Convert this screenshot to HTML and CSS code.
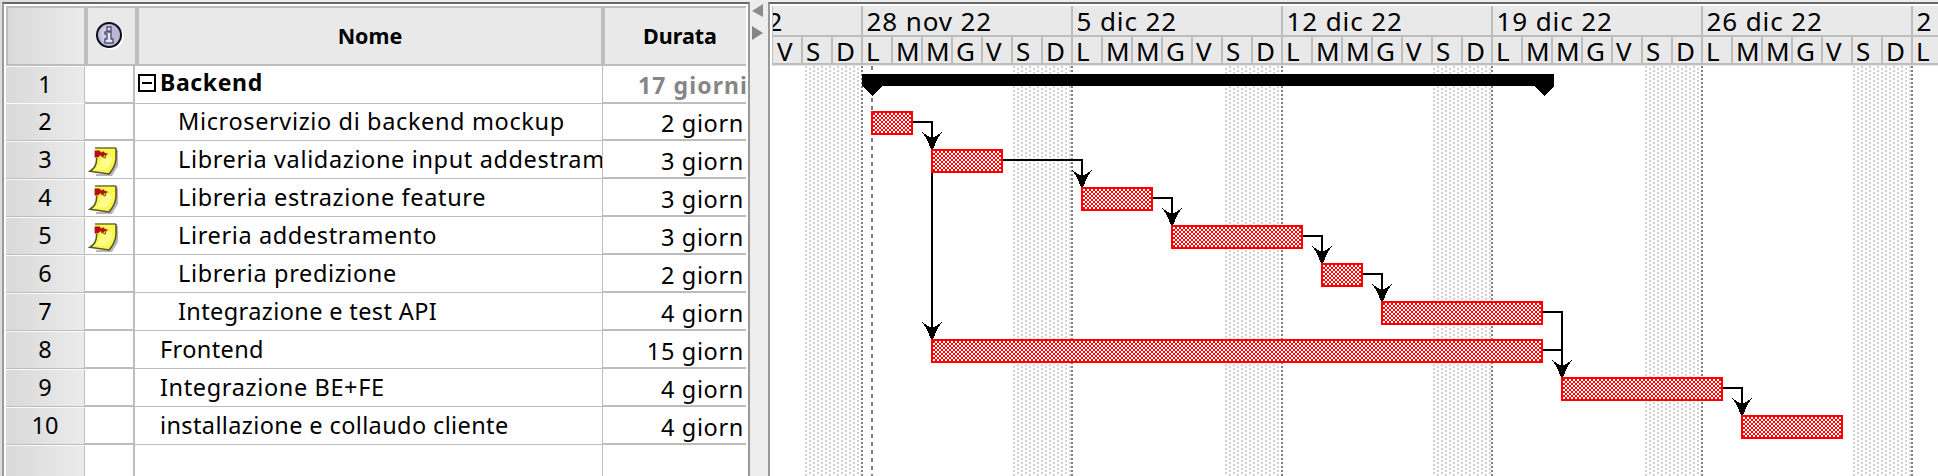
FILE: index.html
```html
<!DOCTYPE html>
<html lang="it">
<head>
<meta charset="utf-8">
<title>Gantt</title>
<link rel="stylesheet" href="styles.css">
</head>
<body>
<svg class="defs" width="0" height="0">
  <symbol id="note" viewBox="0 0 16 16">
    <path d="M13 2h2v8l-3 5H4v-1h7z" fill="#b9b4bb"/>
    <path d="M3.500 1H14v5.500Q13.600 10.500 10.500 14L1 12.600Q4.500 10.500 4.300 6z" fill="#fbf84c"/>
    <path d="M7 5h5q.5 4-3.500 7L4 11.500Q6.500 9 7 5z" fill="#fffd8a"/>
    <path d="M3.500 1H14" stroke="#85854a" stroke-width=".9"/>
    <path d="M14 1v5.500Q13.600 10.500 10.500 14L1 12.600Q4.500 10.500 4.300 6" fill="none" stroke="#55552c" stroke-width=".8"/>
    <path d="M3.300 2.200h2.500l.8 1 1-.6.8.8 1.800.6-2 .7-.8.9-1.200-1-1.200 1.200H3.300z" fill="#b50f12"/>
    <path d="M6.500 5l2 1 .5-1.500" fill="none" stroke="#7c6a10" stroke-width=".6"/>
  </symbol>
</svg>
<div class="app">
  <section class="table-pane">
    <div class="table">
      <div class="row head">
        <div class="cell num"></div>
        <div class="cell info">
          <svg width="28" height="28" viewBox="0 0 14 14">
            <circle cx="7.300" cy="7.300" r="6.500" fill="#fff"/>
            <circle cx="6.500" cy="6.500" r="6" fill="#b9b8d8" stroke="#0c0c14"/>
            <path d="M2.500 4q2-2.500 5-2L4 10Q1.500 8 2.500 4z" fill="#cfcde6"/>
            <path d="M5.500 2.500h2v2h-2zM4.500 5h3v3.500h1v2h-4v-2h1V6h-1z" fill="#e6e5f5" stroke="#55556f" stroke-width=".7"/>
          </svg>
        </div>
        <div class="cell name">Nome</div>
        <div class="cell dur">Durata</div>
      </div>
      <div class="row first"><div class="cell num">1</div><div class="cell info"></div><div class="cell name"><i class="toggle"></i><span class="summary">Backend</span></div><div class="cell dur">17 giorni</div></div>
      <div class="row"><div class="cell num">2</div><div class="cell info"></div><div class="cell name sub">Microservizio di backend mockup</div><div class="cell dur">2 giorn</div></div>
      <div class="row noted"><div class="cell num">3</div><div class="cell info"><svg width="32" height="32"><use href="#note"/></svg></div><div class="cell name sub">Libreria validazione input addestram</div><div class="cell dur">3 giorn</div></div>
      <div class="row noted"><div class="cell num">4</div><div class="cell info"><svg width="32" height="32"><use href="#note"/></svg></div><div class="cell name sub">Libreria estrazione feature</div><div class="cell dur">3 giorn</div></div>
      <div class="row noted"><div class="cell num">5</div><div class="cell info"><svg width="32" height="32"><use href="#note"/></svg></div><div class="cell name sub">Lireria addestramento</div><div class="cell dur">3 giorn</div></div>
      <div class="row"><div class="cell num">6</div><div class="cell info"></div><div class="cell name sub">Libreria predizione</div><div class="cell dur">2 giorn</div></div>
      <div class="row"><div class="cell num">7</div><div class="cell info"></div><div class="cell name sub tight">Integrazione e test API</div><div class="cell dur">4 giorn</div></div>
      <div class="row"><div class="cell num">8</div><div class="cell info"></div><div class="cell name tight">Frontend</div><div class="cell dur">15 giorn</div></div>
      <div class="row"><div class="cell num">9</div><div class="cell info"></div><div class="cell name">Integrazione BE+FE</div><div class="cell dur">4 giorn</div></div>
      <div class="row"><div class="cell num">10</div><div class="cell info"></div><div class="cell name tight">installazione e collaudo cliente</div><div class="cell dur">4 giorn</div></div>
      <div class="row rest"><div class="cell num"></div><div class="cell info"></div><div class="cell name"></div><div class="cell dur"></div></div>
    </div>
  </section>
  <div class="splitter">
    <svg width="18" height="44" viewBox="0 0 18 44"><path d="M13 2v13L2 9z" fill="#8c8c8c"/><path d="M2 24v14l11-7z" fill="#858585"/></svg>
  </div>
  <section class="chart-pane">
    <div class="weeks">
      <div class="week lead"><span class="date">2</span><div class="days"><b>V</b><b>S</b><b>D</b></div></div>
      <div class="week"><span class="date">28 nov 22</span><div class="days"><b>L</b><b>M</b><b>M</b><b>G</b><b>V</b><b>S</b><b>D</b></div></div>
      <div class="week"><span class="date">5 dic 22</span><div class="days"><b>L</b><b>M</b><b>M</b><b>G</b><b>V</b><b>S</b><b>D</b></div></div>
      <div class="week"><span class="date">12 dic 22</span><div class="days"><b>L</b><b>M</b><b>M</b><b>G</b><b>V</b><b>S</b><b>D</b></div></div>
      <div class="week"><span class="date">19 dic 22</span><div class="days"><b>L</b><b>M</b><b>M</b><b>G</b><b>V</b><b>S</b><b>D</b></div></div>
      <div class="week"><span class="date">26 dic 22</span><div class="days"><b>L</b><b>M</b><b>M</b><b>G</b><b>V</b><b>S</b><b>D</b></div></div>
      <div class="week"><span class="date">2</span><div class="days"><b>L</b></div></div>
    </div>
    <svg class="chart" width="1166" height="410" viewBox="772 66 1166 410" shape-rendering="crispEdges">
      <defs>
        <pattern id="dots" x="805" y="66" width="8" height="4" patternUnits="userSpaceOnUse">
          <path d="M0 0h2v2h-2zM4 2h2v2h-2z" fill="#d0d0d0"/>
        </pattern>
        <pattern id="hatch" x="1" y="1" width="4" height="4" patternUnits="userSpaceOnUse">
          <path d="M0 0h4v4h-4z" fill="#fff"/><path d="M0 0h2v2h-2zM2 2h2v2h-2z" fill="#f00"/>
        </pattern>
        <path id="arrow" d="M-10-17L-4-13L0-11.500L4-13L10-17L5.800-11L1 0H-1L-5.800-11z"/>
      </defs>
      <g fill="url(#dots)">
        <path d="M805 66h56v410h-56zM1012 66h59v410h-59zM1225 66h56v410h-56zM1432 66h59v410h-59zM1645 66h56v410h-56zM1852 66h59v410h-59z"/>
      </g>
      <path d="M862 66v410M1072 66v410M1282 66v410M1492 66v410M1702 66v410M1912 66v410" stroke="#808080" stroke-width="2" stroke-dasharray="2"/>
      <path d="M872 66v410" stroke="#808080" stroke-width="2" stroke-dasharray="4"/>
      <path d="M862 74H1554V87L1544 96L1534 86H882L872 96L862 86z"/>
      <g fill="none" stroke="#000" stroke-width="2">
        <path d="M913 122h19v20M932 160v170M1003 160h79v20M1153 198h19v20M1303 236h19v20M1363 274h19v20M1543 312h19v55M1543 350h19M1723 388h19v20"/>
      </g>
      <use href="#arrow" x="932" y="149"/><use href="#arrow" x="932" y="339"/>
      <use href="#arrow" x="1082" y="187"/><use href="#arrow" x="1172" y="225"/>
      <use href="#arrow" x="1322" y="263"/><use href="#arrow" x="1382" y="301"/>
      <use href="#arrow" x="1562" y="377"/><use href="#arrow" x="1742" y="415"/>
      <g fill="url(#hatch)" stroke="#f00" stroke-width="2">
        <rect x="872" y="112" width="40" height="22"/>
        <rect x="932" y="150" width="70" height="22"/>
        <rect x="1082" y="188" width="70" height="22"/>
        <rect x="1172" y="226" width="130" height="22"/>
        <rect x="1322" y="264" width="40" height="22"/>
        <rect x="1382" y="302" width="160" height="22"/>
        <rect x="932" y="340" width="610" height="22"/>
        <rect x="1562" y="378" width="160" height="22"/>
        <rect x="1742" y="416" width="100" height="22"/>
      </g>
    </svg>
  </section>
</div>
</body>
</html>
```
FILE: styles.css
```css
* { box-sizing: border-box; }
body { margin: 0; background: #eee; font-family: "Noto Sans", sans-serif; color: #000; }
.defs { display: block; }
.app { display: flex; width: 1938px; height: 476px; padding: 2px 0 0 2px; overflow: hidden; background: linear-gradient(90deg, #ddd 0, #eee 120px); }

.table-pane { flex: none; width: 748px; height: 474px; border: 2px solid #999; border-top-color: #68686a; border-bottom: 0; background: #fff; padding: 2px 0 0 2px; overflow: hidden; }
.table { width: 740px; font-size: 23.5px; }
.row { display: grid; grid-template-columns: 79px 50px 468px 143px; height: 38px; line-height: 36px; }
.cell { white-space: nowrap; overflow: hidden; border-bottom: 1px solid #bdbdbd; }
.num { text-align: center; background: linear-gradient(90deg, #d9d9d9, #ebebeb); border-right: 1px solid #bdbdbd; border-top: 1px solid #fafafa; line-height: 34px; }
.info { border-right: 2px solid #bdbdbd; border-bottom-width: 2px; }
.info svg { display: block; margin: 5px 0 0 3px; }
.name { border-right: 1px solid #bdbdbd; padding-left: 25px; letter-spacing: .63px; }
.name.sub { padding-left: 43px; }
.name.tight { letter-spacing: .38px; }
.dur { border-bottom-width: 2px; padding: 2px 2px 0 0; text-align: right; letter-spacing: .65px; }
.noted .info { border-bottom-width: 1px; }
.first { height: 37px; line-height: 34px; }
.first .name { display: flex; align-items: flex-start; padding-left: 3px; font-weight: bold; font-size: 23px; }
.summary { line-height: 32px; }
.first .dur { overflow: visible; padding: 2px 0 0 35px; text-align: left; font-weight: bold; font-size: 23px; letter-spacing: 1.1px; color: #868686; }
.toggle { width: 18px; height: 18px; margin: 8px 4px 0 0; border: 2px solid #000; background: linear-gradient(#000, #000) center / 10px 2px no-repeat; }
.head { height: 60px; line-height: 56px; font-weight: bold; font-size: 21.5px; background: #e9e9e9; border: solid #bdbdbd; border-width: 2px 0; grid-template-columns: 82px 51px 466px 141px; }
.head .cell { border: solid #bdbdbd; border-width: 0 4px 0 0; }
.head .num { border-left-width: 2px; }
.head .info svg { margin: 14px 0 0 8px; }
.head .name { padding: 0; text-align: center; }
.head .name, .head .dur { letter-spacing: 0; }
.head .dur { border: 0; padding: 0 29px 0 0; }
.rest .cell { border-bottom: 0; }

.splitter { flex: none; width: 18px; background: #ededed; }
.splitter svg { display: block; }

.chart-pane { flex: none; width: 1170px; height: 474px; border: solid #68686a; border-width: 2px 0 0 2px; border-left-color: #999; background: #fff; padding: 2px 0 0 2px; overflow: hidden; }
.weeks { display: flex; width: 1166px; height: 60px; overflow: hidden; background: #e9e9e9; font-size: 26px; border-bottom: 1px solid #e9e9e9; }
.week { flex: none; width: 210px; height: 59px; border-left: 2px solid #bdbdbd; overflow: hidden; }
.date { display: block; height: 31px; padding-left: 3.5px; line-height: 30px; border-bottom: 2px solid #bdbdbd; white-space: nowrap; letter-spacing: .9px; }
.days { display: flex; height: 28px; line-height: 29px; border-bottom: 2px solid #bdbdbd; }
.days b { flex: none; width: 30px; padding-left: 3px; font-weight: normal; border-right: 2px solid #bdbdbd; }
.days b:nth-child(7) { border-right: 0; }
.lead { width: 89px; border-left-width: 1px; }
.lead .date { text-indent: -9px; }
.lead .days b:first-child { padding-left: 4px; }
.lead .days b:last-child { border-right: 0; }
.chart { display: block; }
```
